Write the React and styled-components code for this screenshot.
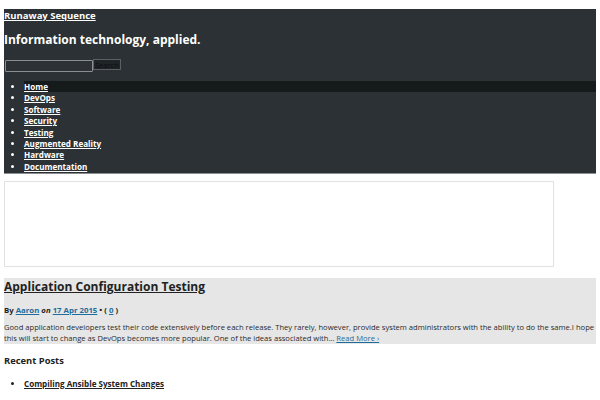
import React from "react";
import styled, { createGlobalStyle } from "styled-components";

const GlobalStyle = createGlobalStyle`
  html, body {
    margin: 0;
    padding: 0;
    background: #ffffff;
  }
  body {
    font-family: "Open Sans", "Noto Sans", sans-serif;
  }
`;

const Page = styled.div`
  width: 600px;
  padding: 9px 4px 0;
  box-sizing: border-box;
`;

const Header = styled.header`
  background: #2b3134;
  border-bottom: 1px solid #8a8e90;
  color: #ffffff;
  padding-bottom: 1px;
`;

const SiteTitle = styled.a`
  display: block;
  color: #ffffff;
  font-size: 9.5px;
  font-weight: 700;
  line-height: 14px;
  text-decoration: underline;
`;

const Tagline = styled.h2`
  margin: 8px 0 10px;
  font-size: 12px;
  font-weight: 700;
  line-height: 18px;
`;

const SearchForm = styled.form`
  display: flex;
  align-items: flex-start;
  margin-bottom: 9px;
`;

const SearchInput = styled.input`
  width: 88px;
  height: 12px;
  margin: 1px 0 0 1px;
  padding: 0;
  box-sizing: border-box;
  background: #2b3134;
  border: 1px solid #8a8e90;
  border-radius: 1px;
`;

const SearchButton = styled.button`
  height: 11px;
  padding: 0 1px;
  background: #1f2527;
  color: #0c0f10;
  border: 1px solid #5a6063;
  font-family: inherit;
  font-size: 7.5px;
  line-height: 8px;
`;

const NavList = styled.ul`
  margin: 0;
  padding: 0 0 0 20px;
  list-style: disc;
`;

const NavItem = styled.li`
  background: ${(p) => (p.$active ? "#151a1b" : "transparent")};
  font-size: 8.1px;
  font-weight: 700;
  line-height: 11.4px;

  &::marker {
    color: #ffffff;
  }
`;

const NavLink = styled.a`
  color: #ffffff;
  text-decoration: underline;
`;

const Banner = styled.div`
  width: 550px;
  height: 86px;
  margin-top: 7px;
  box-sizing: border-box;
  border: 1px solid #e2e2e2;
`;

const Post = styled.article`
  margin-top: 11px;
  padding: 0;
  background: #e6e6e6;
  color: #222222;
`;

const PostTitle = styled.h1`
  margin: 0;
  padding-top: 1px;
  font-size: 12px;
  font-weight: 700;
  line-height: 16px;
`;

const TitleLink = styled.a`
  color: #222222;
  text-decoration: underline;
`;

const Meta = styled.p`
  margin: 9.5px 0 0;
  font-size: 7.8px;
  font-weight: 700;
  line-height: 11px;
`;

const MetaLink = styled.a`
  color: #1e6d9c;
  text-decoration: underline;
`;

const On = styled.em`
  font-style: italic;
`;

const Excerpt = styled.p`
  margin: 6.5px 0 0;
  font-size: 7.6px;
  line-height: 11px;
  color: #2a2a2a;
`;

const ReadMore = styled.a`
  color: #1e6d9c;
  text-decoration: underline;
`;

const SectionTitle = styled.h3`
  margin: 10px 0 0;
  font-size: 9.4px;
  font-weight: 700;
  line-height: 14px;
  color: #222222;
`;

const RecentList = styled.ul`
  margin: 9.5px 0 0;
  padding-left: 20px;
`;

const RecentItem = styled.li`
  font-size: 8.1px;
  font-weight: 700;
  line-height: 11px;
  color: #222222;
`;

const RecentLink = styled.a`
  color: #222222;
  text-decoration: underline;
`;

const navItems = [
  "Home",
  "DevOps",
  "Software",
  "Security",
  "Testing",
  "Augmented Reality",
  "Hardware",
  "Documentation",
];

export default function App() {
  return (
    <Page>
      <GlobalStyle />
      <Header>
        <SiteTitle href="#">Runaway Sequence</SiteTitle>
        <Tagline>Information technology, applied.</Tagline>
        <SearchForm onSubmit={(e) => e.preventDefault()}>
          <SearchInput type="text" />
          <SearchButton type="submit">Search</SearchButton>
        </SearchForm>
        <NavList>
          {navItems.map((item, i) => (
            <NavItem key={item} $active={i === 0}>
              <NavLink href="#">{item}</NavLink>
            </NavItem>
          ))}
        </NavList>
      </Header>
      <Banner />
      <Post>
        <PostTitle>
          <TitleLink href="#">Application Configuration Testing</TitleLink>
        </PostTitle>
        <Meta>
          By <MetaLink href="#">Aaron</MetaLink> <On>on</On>{" "}
          <MetaLink href="#">17 Apr 2015</MetaLink> • ({" "}
          <MetaLink href="#">0</MetaLink> )
        </Meta>
        <Excerpt>
          Good application developers test their code extensively before each
          release. They rarely, however, provide system administrators with the
          ability to do the same.I hope this will start to change as DevOps
          becomes more popular. One of the ideas associated with…{" "}
          <ReadMore href="#">Read More ›</ReadMore>
        </Excerpt>
      </Post>
      <SectionTitle>Recent Posts</SectionTitle>
      <RecentList>
        <RecentItem>
          <RecentLink href="#">Compiling Ansible System Changes</RecentLink>
        </RecentItem>
      </RecentList>
    </Page>
  );
}
